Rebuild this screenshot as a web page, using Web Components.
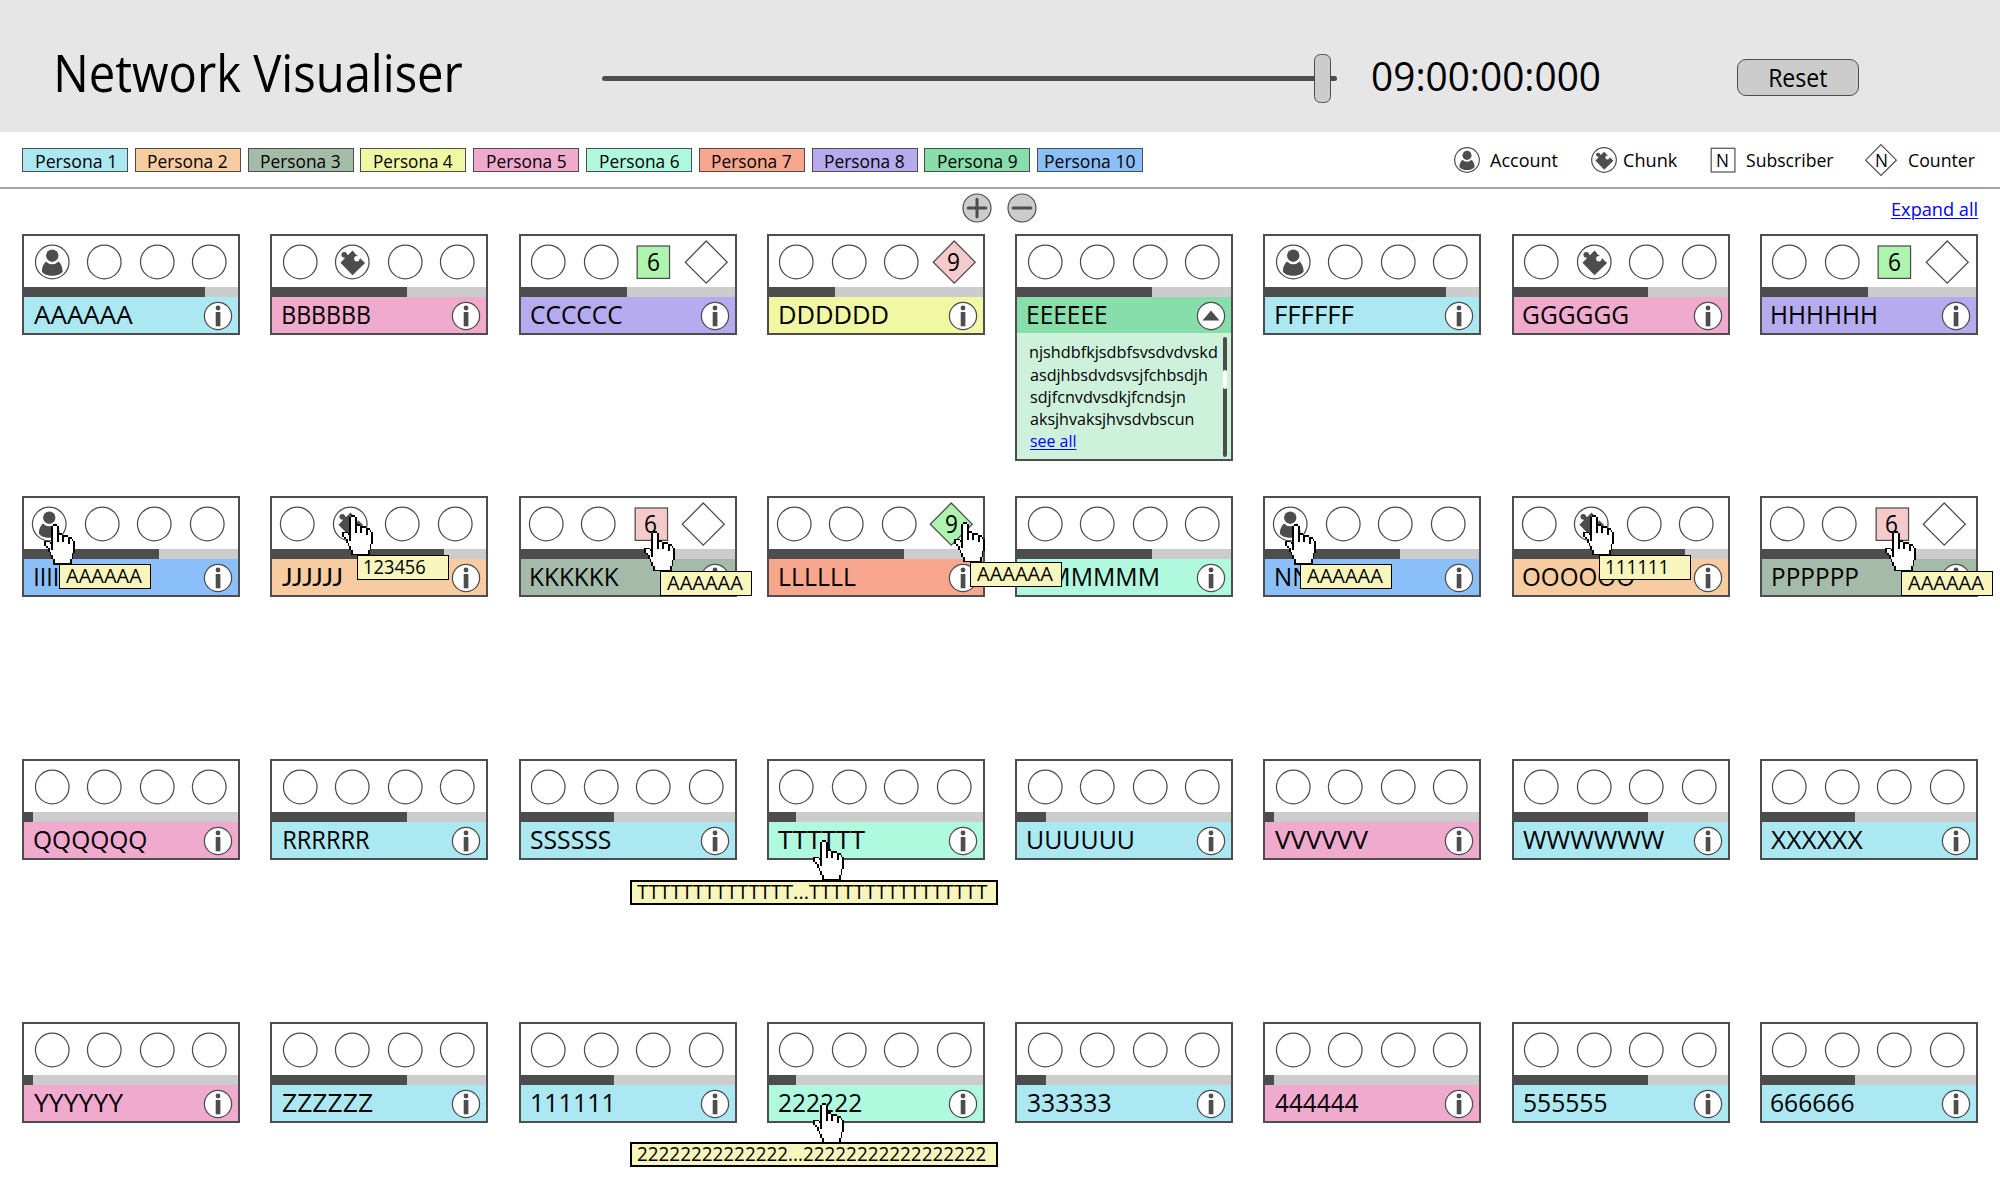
<!DOCTYPE html>
<html lang="en">
<head>
<meta charset="utf-8">
<title>Network Visualiser</title>
<style>
html,body{margin:0;padding:0}
body{width:2000px;height:1192px;overflow:hidden;background:#fff;color:#000;font-family:"Open Sans","Noto Sans",sans-serif}
</style>
</head>
<body>
<network-app></network-app>
<script>
const INK = '#4d4d4d';
const TINT = {1:'#abe8f2',2:'#f7cca0',3:'#a5bbaa',4:'#f1f8a4',5:'#f0aace',6:'#affadf',7:'#f9a68e',8:'#b6abef',9:'#87deaa',10:'#8bbff9'};
const mount = (el, html) => { el.attachShadow({mode:'open'}).innerHTML = html; return el.shadowRoot; };
const ctx = document.createElement('canvas').getContext('2d');

/* One line of text whose glyphs span exactly `w` pixels at the given size. */
customElements.define('fit-text', class extends HTMLElement {
  connectedCallback() {
    if (this.shadowRoot) return;
    const size = +this.getAttribute('size'), w = +this.getAttribute('w');
    const family = `${this.getAttribute('face') || 'Open Sans'}`;
    ctx.font = `${size}px "${family}","Noto Sans",sans-serif`;
    const m = ctx.measureText(this.textContent);
    const k = w / (m.actualBoundingBoxLeft + m.actualBoundingBoxRight);
    mount(this, `<style>
      :host{display:block;flex:none;width:${w}px;height:${size}px;font-family:"${family}","Noto Sans",sans-serif;font-size:${size}px;line-height:${size}px;white-space:pre;font-kerning:auto}
      span{display:inline-block;transform-origin:0 0;transform:translateX(${m.actualBoundingBoxLeft * k}px) scaleX(${k})}
      :host([link]) span{color:#00f;text-decoration:underline;text-decoration-thickness:1.4px;text-underline-offset:2px}
    </style><span><slot></slot></span>`);
  }
});

const GLYPH = {
  circle: '<circle r="16.8"/>',
  account: `<circle r="16.8"/><g fill="${INK}" stroke="none"><circle cy="-6.3" r="6.2"/><path d="M-6.3-.4A8.6 8.6 0 0 0 6.3-.4C8.5 1.5 10.4 5 10.4 9.5 9 12.3 4.5 13.7 0 13.7S-9 12.3-10.4 9.5C-10.4 5-8.5 1.5-6.3-.4Z"/></g>`,
  chunk: `<circle r="16.8"/><g stroke="none"><path fill="${INK}" d="M.3-11.4 3-8.6 3.4-7.4 4.6-7 12.8 1 .3 13.2-11.8.8-7.9-3.2-6.6-5.2-4.6-6.6-2.7-8.4Z"/><circle cx="-8" cy="-7.2" r="2.8" fill="${INK}"/><path d="M-8.5-5.5-5.6-8-3-6-6-3Z" fill="${INK}"/><circle cx="4.6" cy="-3.3" r="2.7"/><path d="M4.6-4.5 6.6-6.4 8.6-4.2 6.4-2.4Z"/></g>`,
  square: '<rect x="-16.1" y="-16" width="32.4" height="32.4"/>',
  diamond: '<path d="M0-21 21 .2 0 21.2-21 .2Z"/>'
};

/* One of the four markers at the top of a card. */
customElements.define('slot-mark', class extends HTMLElement {
  connectedCallback() {
    if (this.shadowRoot) return;
    const fill = this.getAttribute('fill') || '#fff', v = this.getAttribute('value');
    mount(this, `<style>
      :host{display:grid;flex:none;width:52.5px;height:51px}
      svg,fit-text{grid-area:1/1}
      svg{display:block;overflow:visible}
      fit-text{justify-self:center;margin-top:12.9px}
    </style><svg width="52.5" height="51" viewBox="-26.25 -26 52.5 51" fill="${fill}" stroke="${INK}" stroke-width="1.25">${GLYPH[this.getAttribute('kind')]}</svg>${v ? `<fit-text size="25.4" w="11.6">${v}</fit-text>` : ''}`);
  }
});

/* Pixel pointer: X outline, o body. */
const HAND = `.....XX..........
....XooX.........
....XooX.........
....XooX.........
....XooX.........
....XooXXX.......
....XooXooXXX....
....XooXooXooXX..
....XooXooXooXoX.
XXX.XooXooXooXooX
XooXXooooooooXooX
XoooXoooooooooooX
.XooXoooooooooooX
..XoXoooooooooooX
..XoooooooooooooX
...XooooooooooooX
...XoooooooooooX.
....XooooooooooX.
....XooooooooooX.
.....XooooooooX..
.....XooooooooX..
.....XXXXXXXXXX..`.split('\n');
const cells = ch => HAND.map((r, y) => [...r].map((c, x) => c === ch ? `M${x} ${y}h1v1h-1z` : '').join('')).join('');
customElements.define('hand-pointer', class extends HTMLElement {
  connectedCallback() {
    if (this.shadowRoot) return;
    mount(this, `<style>:host{display:block}svg{display:block}</style>
    <svg width="31.3" height="40.5" viewBox="0 0 17 22" preserveAspectRatio="none" shape-rendering="crispEdges"><path fill="#fff" d="${cells('o')}"/><path d="${cells('X')}"/></svg>`);
  }
});

customElements.define('tool-tip', class extends HTMLElement {
  connectedCallback() {
    if (this.shadowRoot) return;
    const wide = this.hasAttribute('wide');
    mount(this, `<style>
      :host{display:block;box-sizing:border-box;width:${wide ? 368 : 92}px;height:25px;background:#f8f6bd;border:${wide ? 2 : 1}px solid #000;padding:${wide ? '0 0 0 5.7px' : '1.3px 0 0 6px'}}
    </style><slot></slot>`);
  }
});

customElements.define('node-card', class extends HTMLElement {
  set data(d) {
    const marks = (d.marks || 'cccc').split('').map(m => ({
      c: '<slot-mark kind="circle"></slot-mark>',
      a: '<slot-mark kind="account"></slot-mark>',
      p: '<slot-mark kind="chunk"></slot-mark>',
      s: '<slot-mark kind="square" fill="#aef4ae" value="6"></slot-mark>',
      S: '<slot-mark kind="square" fill="#f4caca" value="6"></slot-mark>',
      d: '<slot-mark kind="diamond"></slot-mark>',
      N: '<slot-mark kind="diamond" fill="#f4caca" value="9"></slot-mark>',
      G: '<slot-mark kind="diamond" fill="#aef4ae" value="9"></slot-mark>'
    })[m]).join('');
    const glyph = d.detail ? '<path d="M-8.5 4.4H8.5L0-5.4Z"/>' : '<circle cy="-8" r="2.4"/><path d="M-2.3-4H2.4V10.3H-2.3Z"/>';
    const detail = d.detail ? `<div class="detail"><div class="lines">${d.detail.map(([t, w, l]) => `<fit-text size="16.6" w="${w}" ${l ? 'link' : ''}>${t}</fit-text>`).join('')}</div><div class="scroll"><i></i></div></div>` : '';
    const hover = d.tip ? `<div class="tip"><tool-tip ${d.tip.wide ? 'wide' : ''}><fit-text size="19.4" w="${d.tip.w}">${d.tip.text}</fit-text></tool-tip></div><div class="hand"><hand-pointer></hand-pointer></div>` : '';
    mount(this, `<style>
      :host{display:block;position:relative;box-sizing:border-box;width:218px;border:2px solid ${INK};background:#fff}
      .marks{display:flex;height:51px;padding-left:${d.shift ? 0 : 2.5}px;margin-left:-.8px}
      .bar{height:10px;background:#ccc}
      .bar i{display:block;height:10px;background:${INK};width:${d.fill - 2}px}
      .name{display:flex;justify-content:space-between;align-items:flex-start;height:36px;box-sizing:border-box;background:${TINT[d.p]};padding:0 5px 0 ${d.x - 2}px}
      .name fit-text{margin-top:5.2px}
      .name svg{margin-top:3.6px}
      .detail{display:flex;justify-content:space-between;height:126px;box-sizing:border-box;background:#cef1dc;padding:3px 4px 0 12.6px}
      .lines{display:flex;flex-direction:column;gap:5.6px;padding-top:8.4px}
      .scroll{width:4.4px;height:119.6px;margin-top:1px;border-radius:2.2px;background:${INK};display:flex;align-items:flex-start}
      .scroll i{width:4.4px;height:19px;margin-top:33px;border-radius:2px;background:#fff}
      .tip,.hand{position:absolute;z-index:5}
      ${d.tip ? `.tip{left:${d.tip.x - 2}px;top:${d.tip.y - 2}px}.hand{left:${d.tip.hx - 2}px;top:${d.tip.hy - 2}px;z-index:6}` : ''}
    </style>
    <div class="marks">${marks}</div>
    <div class="bar"><i></i></div>
    <div class="name"><fit-text size="25.4" w="${d.w}" ${d.face ? `face="${d.face}"` : ''}>${d.name}</fit-text>
      <svg width="30" height="30" viewBox="-15 -15 30 30" fill="${INK}"><circle r="13.6" fill="#fff" stroke="${INK}" stroke-width="1.25"/>${glyph}</svg></div>
    ${detail}${hover}`);
  }
});

const A6 = (x, y, hx, hy) => ({text:'AAAAAA', w:76.7, x, y, hx, hy});
const CARDS = [
  {name:'AAAAAA',x:11.9,w:99.7,p:1,fill:182.5,marks:'accc'},
  {name:'BBBBBB',x:12.3,w:87.6,p:5,fill:136.5,marks:'cpcc'},
  {name:'CCCCCC',x:12,w:91.7,p:8,fill:108.6,marks:'ccsd'},
  {name:'DDDDDD',x:13.3,w:107.6,p:4,fill:68.3,marks:'cccN'},
  {name:'EEEEEE',x:13.3,w:78.6,p:9,fill:137.3,detail:[['njshdbfkjsdbfsvsdvdvskd',186.7],['asdjhbsdvdsvsjfchbsdjh',176.7],['sdjfcnvdvsdkjfcndsjn',154.7],['aksjhvaksjhvsdvbscun',163.3],['see all',45.3,1]]},
  {name:'FFFFFF',x:12.8,w:77.7,p:1,fill:182.5,marks:'accc'},
  {name:'GGGGGG',x:11.6,w:104.7,p:5,fill:136.5,marks:'cpcc'},
  {name:'HHHHHH',x:12.5,w:104.3,p:8,fill:108.5,marks:'ccsd'},

  {name:'IIIIII',x:13.4,w:35.3,p:10,fill:136.8,shift:1,marks:'accc',tip:A6(37.2,67.5,21.6,28)},
  {name:'JJJJJJ',x:11.5,w:59.3,p:2,fill:173.7,shift:1,marks:'cpcc',face:'Lato',tip:{text:'123456',w:61.7,x:87.2,y:58.9,hx:71.8,hy:18.5}},
  {name:'KKKKKK',x:12.9,w:88,p:3,fill:136.8,shift:1,marks:'ccSd',tip:A6(141.2,74.5,125.7,34.7)},
  {name:'LLLLLL',x:13.3,w:75.6,p:7,fill:137,shift:1,marks:'cccG',tip:A6(203,65.5,187.2,25.5)},
  {name:'MMMMMM',x:13,w:130.2,p:6,fill:137.3},
  {name:'NNNNNN',x:12.4,w:105,p:10,fill:136.5,shift:1,marks:'accc',tip:A6(36.8,67.5,21.3,28)},
  {name:'OOOOOO',x:11.7,w:111.3,p:2,fill:173.3,shift:1,marks:'cpcc',tip:{text:'111111',w:59.3,x:87.4,y:58.9,hx:71.4,hy:18.5}},
  {name:'PPPPPP',x:13,w:84.7,p:3,fill:136.8,shift:1,marks:'ccSd',tip:A6(141,74.5,125.3,34.7)},

  {name:'QQQQQQ',x:11.8,w:112.7,p:5,fill:11.2},
  {name:'RRRRRR',x:13.3,w:86,p:1,fill:136.8},
  {name:'SSSSSS',x:12.5,w:79.4,p:1,fill:95.3},
  {name:'TTTTTT',x:11.6,w:87,p:6,fill:29.6,tip:{text:'TTTTTTTTTTTTTT...TTTTTTTTTTTTTTTT',w:350.7,x:-137,y:120.5,hx:46.7,hy:80.5,wide:1}},
  {name:'UUUUUU',x:12.8,w:105.5,p:1,fill:30.6},
  {name:'VVVVVV',x:11.8,w:94,p:5,fill:11.2},
  {name:'WWWWWW',x:11,w:142,p:1,fill:136.8},
  {name:'XXXXXX',x:11.3,w:92,p:1,fill:95.3},

  {name:'YYYYYY',x:11.5,w:90,p:5,fill:11.2},
  {name:'ZZZZZZ',x:12,w:90.5,p:1,fill:136.8},
  {name:'111111',x:13.9,w:78.3,p:1,fill:95.3},
  {name:'222222',x:12.2,w:82.7,p:6,fill:29.6,tip:{text:'22222222222222...22222222222222222',w:349.3,x:-137,y:120.4,hx:46.7,hy:81.3,wide:1}},
  {name:'333333',x:12.6,w:83,p:1,fill:30.6},
  {name:'444444',x:11.4,w:84,p:5,fill:11.2},
  {name:'555555',x:12,w:83,p:1,fill:136.8},
  {name:'666666',x:11.7,w:83,p:1,fill:95.3}
];

customElements.define('node-board', class extends HTMLElement {
  connectedCallback() {
    if (this.shadowRoot) return;
    const root = mount(this, `<style>
      :host{display:grid;grid-template-columns:repeat(8,248.25px);grid-template-rows:262px 263px 263px 105px;align-items:start;padding-left:22px;width:2008px;box-sizing:border-box}
    </style>`);
    for (const d of CARDS) {
      const c = document.createElement('node-card');
      c.data = d;
      root.append(c);
    }
  }
});

customElements.define('persona-chip', class extends HTMLElement {
  connectedCallback() {
    if (this.shadowRoot) return;
    const n = +this.getAttribute('n');
    mount(this, `<style>:host{display:block;flex:none;box-sizing:border-box;width:106px;height:24px;border:1px solid ${INK};background:${TINT[n]};padding:3px 0 0 ${n === 10 ? 7 : 12.6}px}</style>
    <fit-text size="18.2" w="${n === 10 ? 90 : n === 1 ? 78 : 79.2}">Persona ${n}</fit-text>`);
  }
});

customElements.define('legend-item', class extends HTMLElement {
  connectedCallback() {
    if (this.shadowRoot) return;
    const a = n => this.getAttribute(n);
    mount(this, `<style>
      :host{display:flex;flex:none;height:34px;gap:${a('gap')}px}
      div{display:grid;width:34px;height:34px}
      svg,div fit-text{grid-area:1/1}
      svg{display:block}
      div fit-text{justify-self:center;margin-top:8px}
      .label{margin-top:8px}
    </style><div><svg width="34" height="34" viewBox="-23.2 -23.2 46.4 46.4" fill="#fff" stroke="${INK}" stroke-width="1.6">${GLYPH[a('kind')]}</svg>${a('mark') ? `<fit-text size="18.2" w="10.4">${a('mark')}</fit-text>` : ''}</div>
    <fit-text class="label" size="18.4" w="${a('w')}">${a('label')}</fit-text>`);
  }
});

customElements.define('round-button', class extends HTMLElement {
  connectedCallback() {
    if (this.shadowRoot) return;
    mount(this, `<style>:host{display:block;flex:none;width:30px;height:30px}svg{display:block}</style>
    <svg width="30" height="30" viewBox="-15 -15 30 30" stroke="${INK}"><circle r="14" fill="#ccc" stroke-width="1.2"/><path stroke-width="3" stroke-linecap="round" d="M-8.8 0H8.8${this.getAttribute('kind') === 'plus' ? 'M0-8.8V8.8' : ''}"/></svg>`);
  }
});

customElements.define('time-slider', class extends HTMLElement {
  connectedCallback() {
    if (this.shadowRoot) return;
    mount(this, `<style>
      :host{display:grid;flex:none;width:735.6px;height:49px;align-items:center}
      i,b{grid-area:1/1;display:block;box-sizing:border-box}
      i{height:5px;border-radius:2.5px;background:${INK}}
      b{width:17px;height:49px;margin-left:712.4px;border:1px solid ${INK};border-radius:6.5px;background:#ccc}
    </style><i></i><b></b>`);
  }
});

customElements.define('top-header', class extends HTMLElement {
  connectedCallback() {
    if (this.shadowRoot) return;
    mount(this, `<style>
      :host{display:flex;align-items:flex-start;height:132px;box-sizing:border-box;background:#e6e6e6;padding-left:57px}
      .title{margin-top:47.6px}
      time-slider{margin:54px 0 0 139.6px}
      .time{margin:56px 0 0 35.4px}
      button{all:unset;box-sizing:border-box;width:122px;height:37px;margin:59px 0 0 138px;border:1px solid ${INK};border-radius:9px;background:#ccc;padding:0 0 0 32px}
    </style>
    <fit-text class="title" size="50.4" w="405.3">Network Visualiser</fit-text>
    <time-slider></time-slider>
    <fit-text class="time" size="40" w="226.2">09:00:00:000</fit-text>
    <button><fit-text size="24.8" w="57.6">Reset</fit-text></button>`);
  }
});

customElements.define('tool-row', class extends HTMLElement {
  connectedCallback() {
    if (this.shadowRoot) return;
    mount(this, `<style>
      :host{display:flex;justify-content:space-between;align-items:flex-start;height:57px;box-sizing:border-box;border-bottom:2px solid #a3a3a3;padding:0 24.9px 0 22px}
      .chips{display:flex;gap:6.8px;padding-top:16px}
      .legend{display:flex;padding-top:11px}
    </style>
    <div class="chips">${Array.from({length:10}, (_, i) => `<persona-chip n="${i + 1}"></persona-chip>`).join('')}</div>
    <div class="legend">
      <legend-item kind="account" label="Account" w="68.4" gap="6.1"></legend-item>
      <legend-item kind="chunk" label="Chunk" w="53.6" gap="3.5" style="margin-left:28.5px"></legend-item>
      <legend-item kind="square" mark="N" label="Subscriber" w="88" gap="6.5" style="margin-left:27.9px"></legend-item>
      <legend-item kind="diamond" mark="N" label="Counter" w="66.5" gap="10.6" style="margin-left:30px"></legend-item>
    </div>`);
  }
});

customElements.define('zoom-row', class extends HTMLElement {
  connectedCallback() {
    if (this.shadowRoot) return;
    mount(this, `<style>
      :host{display:flex;align-items:flex-start;height:45px;box-sizing:border-box;padding:3.8px 0 0 962.2px;gap:14.9px}
      .all{margin:7.6px 0 0 840.4px}
    </style>
    <round-button kind="plus"></round-button><round-button kind="minus"></round-button>
    <fit-text class="all" size="18.5" w="85.5" link>Expand all</fit-text>`);
  }
});

customElements.define('network-app', class extends HTMLElement {
  connectedCallback() {
    if (this.shadowRoot) return;
    mount(this, `<style>:host{display:flex;flex-direction:column;width:2000px;height:1192px;overflow:hidden}</style>
    <top-header></top-header><tool-row></tool-row><zoom-row></zoom-row><node-board></node-board>`);
  }
});
</script>
</body>
</html>
